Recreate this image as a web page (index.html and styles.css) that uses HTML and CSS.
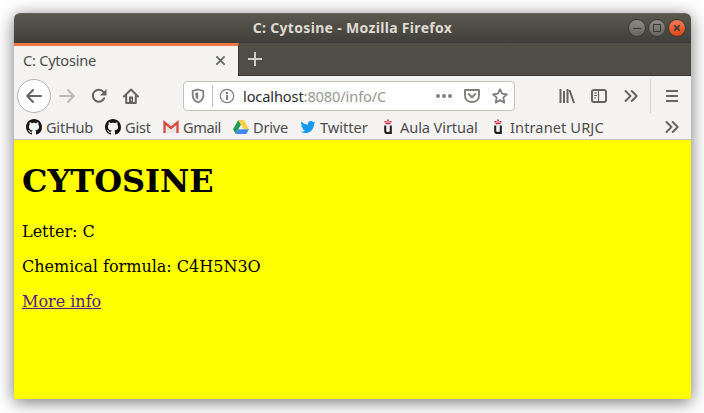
FILE: index.html
```html
<!DOCTYPE html>
<html lang="en">
<head>
<meta charset="utf-8">
<title>C: Cytosine</title>
<link rel="stylesheet" href="styles.css">
</head>
<body>
<svg width="0" height="0" class="defs">
  <symbol id="octocat" viewBox="0 0 16 16"><path fill="#161514" d="M8 0C3.58 0 0 3.58 0 8c0 3.54 2.29 6.53 5.47 7.59.4.07.55-.17.55-.38 0-.19-.01-.82-.01-1.49-2.01.37-2.53-.49-2.69-.94-.09-.23-.48-.94-.82-1.13-.28-.15-.68-.52-.01-.53.63-.01 1.08.58 1.23.82.72 1.21 1.87.87 2.33.66.07-.52.28-.87.51-1.07-1.78-.2-3.64-.89-3.64-3.95 0-.87.31-1.59.82-2.15-.08-.2-.36-1.02.08-2.12 0 0 .67-.21 2.2.82.64-.18 1.32-.27 2-.27s1.36.09 2 .27c1.53-1.04 2.2-.82 2.2-.82.44 1.1.16 1.92.08 2.12.51.56.82 1.27.82 2.15 0 3.07-1.87 3.75-3.65 3.95.29.25.54.73.54 1.48 0 1.07-.01 1.93-.01 2.2 0 .21.15.46.55.38A8.01 8.01 0 0 0 16 8c0-4.42-3.58-8-8-8z"/></symbol>
  <symbol id="urjc" viewBox="0 0 16 16"><path fill="#d02342" d="M7.200 0.500h1.600v1.500h-1.600zM4.500 2h2v1.500h-2zM9.500 2h2v1.500h-2zM7 2.500h2v1H7zM5.500 4h5v1.300h-5z"/><path fill="none" stroke="#222" stroke-width="2.100" d="M5.200 6.500v5.400q0 2.100 2.300 2.100 1.600 0 3.200-.5M10.800 6.500v8.500"/></symbol>
  <symbol id="more" viewBox="0 0 16 16"><path fill="none" stroke="#666563" stroke-width="2" stroke-linecap="round" stroke-linejoin="round" d="M2.500 3l5 5-5 5M8.700 3l5 5-5 5"/></symbol>
</svg>
<div class="window">
  <header class="titlebar">
    <span class="title">C: Cytosine - Mozilla Firefox</span>
    <div class="controls">
      <span class="control"><svg viewBox="0 0 16 16"><path d="M4 8.500h8"/></svg></span>
      <span class="control"><svg viewBox="0 0 16 16"><path d="M4.500 4.500h7v7h-7z"/></svg></span>
      <span class="control close"><svg viewBox="0 0 16 16"><path d="M5.200 5.200l5.600 5.600M10.800 5.200l-5.600 5.600"/></svg></span>
    </div>
  </header>
  <div class="tabs">
    <div class="tab"><span class="tab-label">C: Cytosine</span><svg class="tab-close" viewBox="0 0 12 12"><path d="M1.500 1.500l9 9M10.500 1.500l-9 9"/></svg></div>
    <svg class="new-tab" viewBox="0 0 14 14"><path d="M7 0v14M0 7h14"/></svg>
  </div>
  <nav class="toolbar">
    <span class="back"><svg class="icon" viewBox="0 0 16 16"><path d="M15 8H1.500M7 2L1.200 8 7 14"/></svg></span>
    <svg class="icon forward" viewBox="0 0 16 16"><path d="M1 8h13.500M9 2l5.800 6L9 14"/></svg>
    <svg class="icon reload" viewBox="0 0 16 16"><path d="M13.200 10.300A6 6 0 1 1 12.500 4"/><path class="solid" d="M15.500 1v6.500H9z"/></svg>
    <svg class="icon home" viewBox="0 0 16 16"><path d="M1 8.500l7-7 7 7M3.200 8v6.900h9.600V8"/><path class="solid" d="M6 8.500h4v6H6z"/><path class="knob" d="M8.500 11v1.500"/></svg>
    <div class="urlbar">
      <svg class="shield" viewBox="0 0 14 16"><path d="M7 1.500l5.300 1.400v4.300c0 3.700-2 5.900-5.300 7.200C3.700 13.100 1.700 10.900 1.700 7.200V2.900z"/><path class="solid" d="M7.200 4.300v7.500C5.200 10.600 4.300 9.200 4.300 7.200V5z"/></svg>
      <span class="url-divider"></span>
      <svg class="info" viewBox="0 0 16 16"><circle cx="8" cy="8" r="6.700"/><path class="mark" d="M8 7v5M8 4v1.900"/></svg>
      <span class="url"><span class="host">localhost</span>:8080/info/C</span>
      <svg class="dots" viewBox="0 0 16 16"><circle cx="2" cy="8" r="2"/><circle cx="8" cy="8" r="2"/><circle cx="14" cy="8" r="2"/></svg>
      <svg class="icon pocket" viewBox="0 0 16 16"><path d="M1 2h14v5.500c0 4-3 6.500-7 6.500s-7-2.500-7-6.500zM4.700 6L8 9.300 11.300 6"/></svg>
      <svg class="icon star" viewBox="0 0 16 16"><path d="M8 1.200l2.100 4.500 4.800.6-3.600 3.300 1 5L8 12.100l-4.300 2.500 1-5L1.100 6.300l4.800-.6z"/></svg>
    </div>
    <svg class="icon library" viewBox="0 0 16 16"><path d="M1.500 1v14M5 3v12M8.500 1v14M10.500 2l4.500 13"/></svg>
    <svg class="icon sidebar" viewBox="0 0 16 16"><rect x="1" y="2" width="14" height="12" rx="2"/><path class="thin" d="M7.500 2v12M3 5h3M3 7.500h3M3 10h2"/></svg>
    <svg class="overflow"><use href="#more"/></svg>
    <span class="menu-zone"><svg class="icon" viewBox="0 0 16 16"><path d="M2 3h12M2 8h12M2 13h12"/></svg></span>
  </nav>
  <div class="bookmarks">
    <a class="bm github"><svg><use href="#octocat"/></svg><span>GitHub</span></a>
    <a class="bm gist"><svg><use href="#octocat"/></svg><span>Gist</span></a>
    <a class="bm gmail"><svg viewBox="0 0 16 16"><path fill="#e9e7e6" d="M1 3h14v11H1z"/><path fill="none" stroke="#d54b3d" stroke-width="2.300" d="M1.500 14V3.500L8 9l6.500-5.500V14"/></svg><span>Gmail</span></a>
    <a class="bm drive"><svg viewBox="0 0 16 16"><path fill="#219b55" d="M5.300 1L8 5.500 2.700 15 0 10.300z"/><path fill="#ffcf48" d="M5.300 1h5.400L16 10.300h-5.400z"/><path fill="#4285f4" d="M5.400 10.300H16L13.300 15H2.700z"/></svg><span>Drive</span></a>
    <a class="bm twitter"><svg viewBox="-1 -1 26 26"><path fill="#159bf0" d="M23.950 4.570a10 10 0 0 1-2.820.77 4.960 4.960 0 0 0 2.160-2.720c-.95.550-2 .95-3.130 1.180a4.920 4.920 0 0 0-8.380 4.480C7.690 8.090 4.070 6.130 1.640 3.160a4.900 4.900 0 0 0 1.520 6.570 4.900 4.900 0 0 1-2.230-.62v.06a4.920 4.920 0 0 0 3.950 4.830 5 5 0 0 1-2.210.08 4.940 4.940 0 0 0 4.600 3.420A9.870 9.870 0 0 1 0 19.540a14 14 0 0 0 7.550 2.210c9.050 0 14-7.500 14-13.980 0-.21 0-.42-.02-.63a9.940 9.940 0 0 0 2.420-2.570z"/></svg><span>Twitter</span></a>
    <a class="bm aula"><svg><use href="#urjc"/></svg><span>Aula Virtual</span></a>
    <a class="bm intranet"><svg><use href="#urjc"/></svg><span>Intranet URJC</span></a>
    <svg class="bm-more"><use href="#more"/></svg>
  </div>
  <main class="page">
    <h1>CYTOSINE</h1>
    <p>Letter: C</p>
    <p>Chemical formula: C4H5N3O</p>
    <p><a class="link" href="#">More info</a></p>
  </main>
</div>
</body>
</html>
```
FILE: styles.css
```css
* { box-sizing: border-box; }
html { background: #fff; overflow: hidden; }
body {
  margin: 0;
  padding: 13px 13px 14px 14px;
  height: 413px;
  font: 14.6px/20px "Noto Sans", sans-serif;
  color: #4c4c4c;
}
.defs { position: absolute; }
svg { display: block; flex: none; }
.window {
  height: 386px;
  display: flex;
  flex-direction: column;
  border-radius: 6px 6px 0 0;
  box-shadow: 0 3px 17px rgba(0, 0, 0, .55);
}
.titlebar {
  height: 30px;
  flex: none;
  display: grid;
  grid-template-columns: 1fr auto 1fr;
  align-items: center;
  border-radius: 6px 6px 0 0;
  border-top: 1px solid #66645a;
  border-bottom: 1px solid #3c3b37;
  background: linear-gradient(#5a584e, #403f3a);
}
.title {
  grid-column: 2;
  font-weight: 700;
  font-size: 14px;
  letter-spacing: .32px;
  color: #dfdbd2;
  white-space: nowrap;
}
.controls { display: flex; gap: 2px; justify-self: end; padding-right: 5px; }
.control {
  width: 18px;
  height: 18px;
  border: 1px solid #393832;
  border-radius: 50%;
  background: linear-gradient(#8c8b84, #65645e);
}
.control svg { width: 16px; height: 16px; fill: none; stroke: #393832; }
.control.close { background: linear-gradient(#f37a56, #dc4818); }
.control.close svg { stroke-width: 1.600; }
.tabs {
  height: 33px;
  flex: none;
  display: flex;
  background: #504d46;
  border-bottom: 1px solid #393532;
}
.tab {
  width: 225px;
  height: 33px;
  display: flex;
  align-items: center;
  justify-content: space-between;
  padding: 0 12px 2px 9px;
  margin-right: 9px;
  border-top: 3px solid #f07746;
  border-right: 1px solid #393532;
  background: #f4f3f2;
}
.tab-label { letter-spacing: -.25px; }
.tab-close { width: 11px; height: 11px; fill: none; stroke: #666; stroke-width: 1.900; }
.new-tab { width: 14px; height: 14px; margin-top: 9px; stroke: #d0ccc3; stroke-width: 2; }
.toolbar {
  height: 40px;
  flex: none;
  display: flex;
  align-items: center;
  background: #f4f3f2;
  padding-left: 3px;
}
.icon {
  width: 16px;
  height: 16px;
  fill: none;
  stroke: #666563;
  stroke-width: 2;
  stroke-linecap: round;
  stroke-linejoin: round;
}
.solid { fill: #666563; stroke: none; }
.back {
  width: 34px;
  height: 34px;
  display: grid;
  place-items: center;
  border: 1px solid #b3b1af;
  border-radius: 50%;
  background: #fff;
}
.forward { margin-left: 8px; stroke: #bdbbb9; }
.reload { margin-left: 16px; }
.home { margin-left: 16px; }
.knob { stroke: #f4f3f2; stroke-width: 1; stroke-linecap: butt; }
.urlbar {
  width: 332px;
  height: 30px;
  display: flex;
  align-items: center;
  margin-left: 44px;
  padding-left: 7px;
  border: 1px solid #c4c1bc;
  border-radius: 4px;
  background: #fff;
}
.shield { width: 14px; height: 16px; fill: none; stroke: #81807e; stroke-width: 1.800; }
.shield .solid { fill: #81807e; }
.url-divider { width: 1px; height: 22px; margin: 0 6px 0 7px; background: #c4c2c0; }
.info { width: 16px; height: 16px; fill: none; stroke: #81807e; stroke-width: 1.200; }
.mark { stroke-width: 2; }
.url { width: 193px; margin-left: 8px; white-space: nowrap; letter-spacing: -.12px; color: #989694; }
.host { color: #2b2b2b; }
.dots { width: 16px; height: 16px; fill: #81807e; }
.pocket, .star { stroke: #81807e; }
.pocket { margin-left: 12px; }
.star { margin-left: 12px; stroke-width: 1.800; }
.library { margin-left: 44px; stroke-linecap: butt; }
.sidebar { margin-left: 16px; }
.thin { stroke-width: 1.200; stroke-linecap: butt; }
.overflow { width: 16px; height: 16px; margin-left: 16px; }
.menu-zone {
  height: 34px;
  display: flex;
  align-items: center;
  margin-left: 11px;
  padding-left: 13px;
  border-left: 1px solid #d5d3d1;
}
.menu-zone .icon { stroke-linecap: butt; }
.bookmarks {
  height: 24px;
  flex: none;
  display: flex;
  align-items: center;
  padding: 0 0 1px 12px;
  background: #f4f3f2;
  border-bottom: 1px solid #c2c0bd;
}
.bm { display: flex; align-items: center; gap: 4px; flex: none; white-space: nowrap; }
.bm svg { width: 16px; height: 16px; }
.bm span { margin-top: -1px; }
.github { width: 79px; letter-spacing: -.25px; }
.gist { width: 58px; letter-spacing: -.2px; }
.gmail { width: 70px; letter-spacing: -.4px; }
.drive { width: 67px; letter-spacing: -.2px; }
.twitter { width: 80px; letter-spacing: 0; }
.aula { width: 110px; letter-spacing: -.1px; }
.intranet { width: 174px; letter-spacing: .1px; }
.bm-more { width: 16px; height: 16px; }
.page {
  flex: 1;
  display: flow-root;
  padding: 0 8px;
  background: #ff0;
  color: #000;
  font: 16px/19px "DejaVu Serif", serif;
}
.page h1 { margin: 22px 0 22px; font-size: 32px; line-height: 38px; }
.page p { margin: 0 0 16px; }
.link { color: #551a8b; }
```
